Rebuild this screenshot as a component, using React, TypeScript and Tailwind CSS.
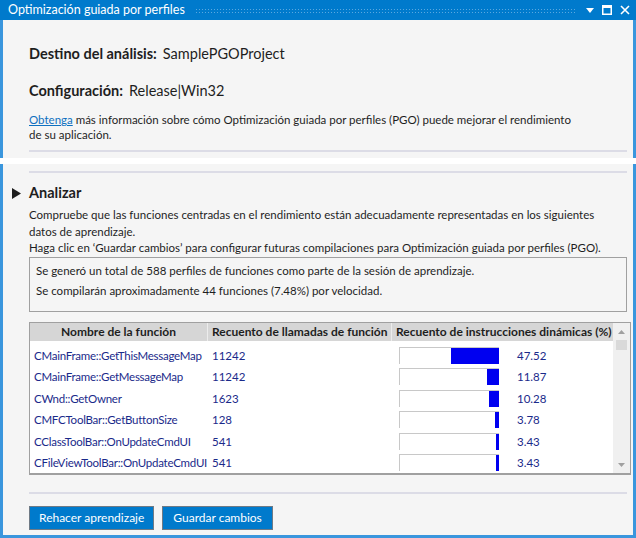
import React from "react"

const rows = [
  { name: "CMainFrame::GetThisMessageMap", calls: "11242", pct: 47.52 },
  { name: "CMainFrame::GetMessageMap", calls: "11242", pct: 11.87 },
  { name: "CWnd::GetOwner", calls: "1623", pct: 10.28 },
  { name: "CMFCToolBar::GetButtonSize", calls: "128", pct: 3.78 },
  { name: "CClassToolBar::OnUpdateCmdUI", calls: "541", pct: 3.43 },
  { name: "CFileViewToolBar::OnUpdateCmdUI", calls: "541", pct: 3.43 },
]

export default function App() {
  return (
    <div className="w-[636px] h-[538px] bg-white overflow-hidden text-[#1e1e1e]" style={{ fontFamily: 'Lato, "Noto Sans", sans-serif' }}>
      {/* title bar */}
      <div className="h-[20px] bg-[#007acc] flex items-center pl-[8px] pr-[6px] gap-[6px]">
        <span className="text-white text-[12.5px] leading-none whitespace-nowrap">Optimización guiada por perfiles</span>
        <div className="flex-1 h-[5px] mx-[4px] bg-[radial-gradient(#5aa8e0_0.6px,transparent_0.8px)] bg-[length:3px_3px]" />
        <div className="flex items-center gap-[8px]">
          <svg width="8" height="5" viewBox="0 0 8 5"><path d="M0 0h8L4 5z" fill="white" /></svg>
          <svg width="10" height="10" viewBox="0 0 10 10"><rect x="0.75" y="0.75" width="8.5" height="8.5" fill="none" stroke="white" strokeWidth="1.5" /><rect x="0" y="0" width="10" height="3" fill="white" /></svg>
          <svg width="10" height="10" viewBox="0 0 10 10"><path d="M1 1l8 8M9 1l-8 8" stroke="white" strokeWidth="1.6" /></svg>
        </div>
      </div>

      {/* top panel */}
      <div className="h-[138px] bg-[#f5f5f5] border-x-[3px] border-[#3a96dd] pl-[26px] pr-[6px] flex flex-col">
        <div className="mt-[24px] text-[14.5px] leading-[20px]">
          <span className="font-bold">Destino del análisis:</span>
          <span className="ml-[6px]">SamplePGOProject</span>
        </div>
        <div className="mt-[17px] text-[14.5px] leading-[20px]">
          <span className="font-bold">Configuración:</span>
          <span className="ml-[6px]">Release|Win32</span>
        </div>
        <p className="mt-[11px] text-[11.5px] leading-[15px] w-[548px]">
          <span className="text-[#0e70c0] underline">Obtenga</span> más información sobre cómo Optimización guiada por perfiles (PGO) puede mejorar el rendimiento de su aplicación.
        </p>
        <div className="mt-[8px] h-[2px] bg-[#dcdce6]" />
      </div>

      <div className="h-[6px] bg-white" />

      {/* bottom panel */}
      <div className="h-[374px] bg-[#f5f5f5] border-x-[3px] border-b-[3px] border-[#3a96dd] pl-[26px] pr-[2px] flex flex-col">
        <div className="mt-[7px] mr-[4px] h-[2px] bg-[#dcdce6]" />
        <div className="mt-[10px] flex items-center text-[14.5px] leading-[20px] font-bold -ml-[17px]">
          <svg width="9" height="11" viewBox="0 0 9 11" className="mr-[8px]"><path d="M0 0l9 5.5L0 11z" fill="#1e1e1e" /></svg>
          Analizar
        </div>
        <div className="mt-[4px] text-[11.5px] leading-[16.5px] whitespace-nowrap">
          <p>Compruebe que las funciones centradas en el rendimiento están adecuadamente representadas en los siguientes<br />datos de aprendizaje.</p>
          <p>Haga clic en ‘Guardar cambios’ para configurar futuras compilaciones para Optimización guiada por perfiles (PGO).</p>
        </div>
        <div className="mr-[4px] h-[55px] border border-[#a0a0a0] px-[6px] pt-[3px] text-[11.5px] leading-[20px]">
          <p>Se generó un total de 588 perfiles de funciones como parte de la sesión de aprendizaje.</p>
          <p>Se compilarán aproximadamente 44 funciones (7.48%) por velocidad.</p>
        </div>

        {/* table */}
        <div className="mt-[10px] h-[153px] bg-white border-l border-t border-b-[2px] border-r border-[#a0a0a0] flex">
          <div className="flex-1 flex flex-col">
            <div className="h-[21px] bg-[#d6d6d6] flex text-[12px] font-bold items-center whitespace-nowrap">
              <div className="w-[178px] text-center border-r border-[#ececec]">Nombre de la función</div>
              <div className="w-[184px] pl-[4px] border-r border-[#ececec]">Recuento de llamadas de función</div>
              <div className="flex-1 pl-[4px]">Recuento de instrucciones dinámicas (%)</div>
            </div>
            <div className="pt-[4px]">
              {rows.map((r) => (
                <div key={r.name} className="h-[21.5px] flex items-center text-[11.5px] text-[#1a2a8a]">
                  <div className="w-[178px] pl-[4px] whitespace-nowrap tracking-[-0.25px]">{r.name}</div>
                  <div className="w-[184px] pl-[4px]">{r.calls}</div>
                  <div className="flex-1 flex items-center pl-[7px]">
                    <div className="w-[100px] h-[17px] bg-white border-l border-t border-[#c8c8c8] flex justify-end">
                      <div className="h-full bg-[#0000f0]" style={{ width: `${r.pct}px` }} />
                    </div>
                    <span className="ml-[18px]">{r.pct.toFixed(2)}</span>
                  </div>
                </div>
              ))}
            </div>
          </div>
          {/* scrollbar */}
          <div className="w-[17px] bg-[#f0f0f0] flex flex-col items-center">
            <svg width="7" height="4" viewBox="0 0 7 4" className="mt-[7px]"><path d="M0 4L3.5 0 7 4z" fill="#a0a0a0" /></svg>
            <div className="mt-[6px] w-[11px] h-[10px] bg-[#d9d9d9]" />
            <div className="flex-1" />
            <svg width="7" height="4" viewBox="0 0 7 4" className="mb-[6px]"><path d="M0 0h7L3.5 4z" fill="#a0a0a0" /></svg>
          </div>
        </div>

        <div className="mt-[17px] mr-[4px] h-[2px] bg-[#dcdce6]" />
        <div className="mt-[12px] flex gap-[8px]">
          <button className="h-[24px] px-[9px] bg-[#007acc] border border-[#6f7a85] text-white text-[12px]">Rehacer aprendizaje</button>
          <button className="h-[24px] px-[10px] bg-[#007acc] border border-[#6f7a85] text-white text-[12px]">Guardar cambios</button>
        </div>
      </div>
    </div>
  )
}
